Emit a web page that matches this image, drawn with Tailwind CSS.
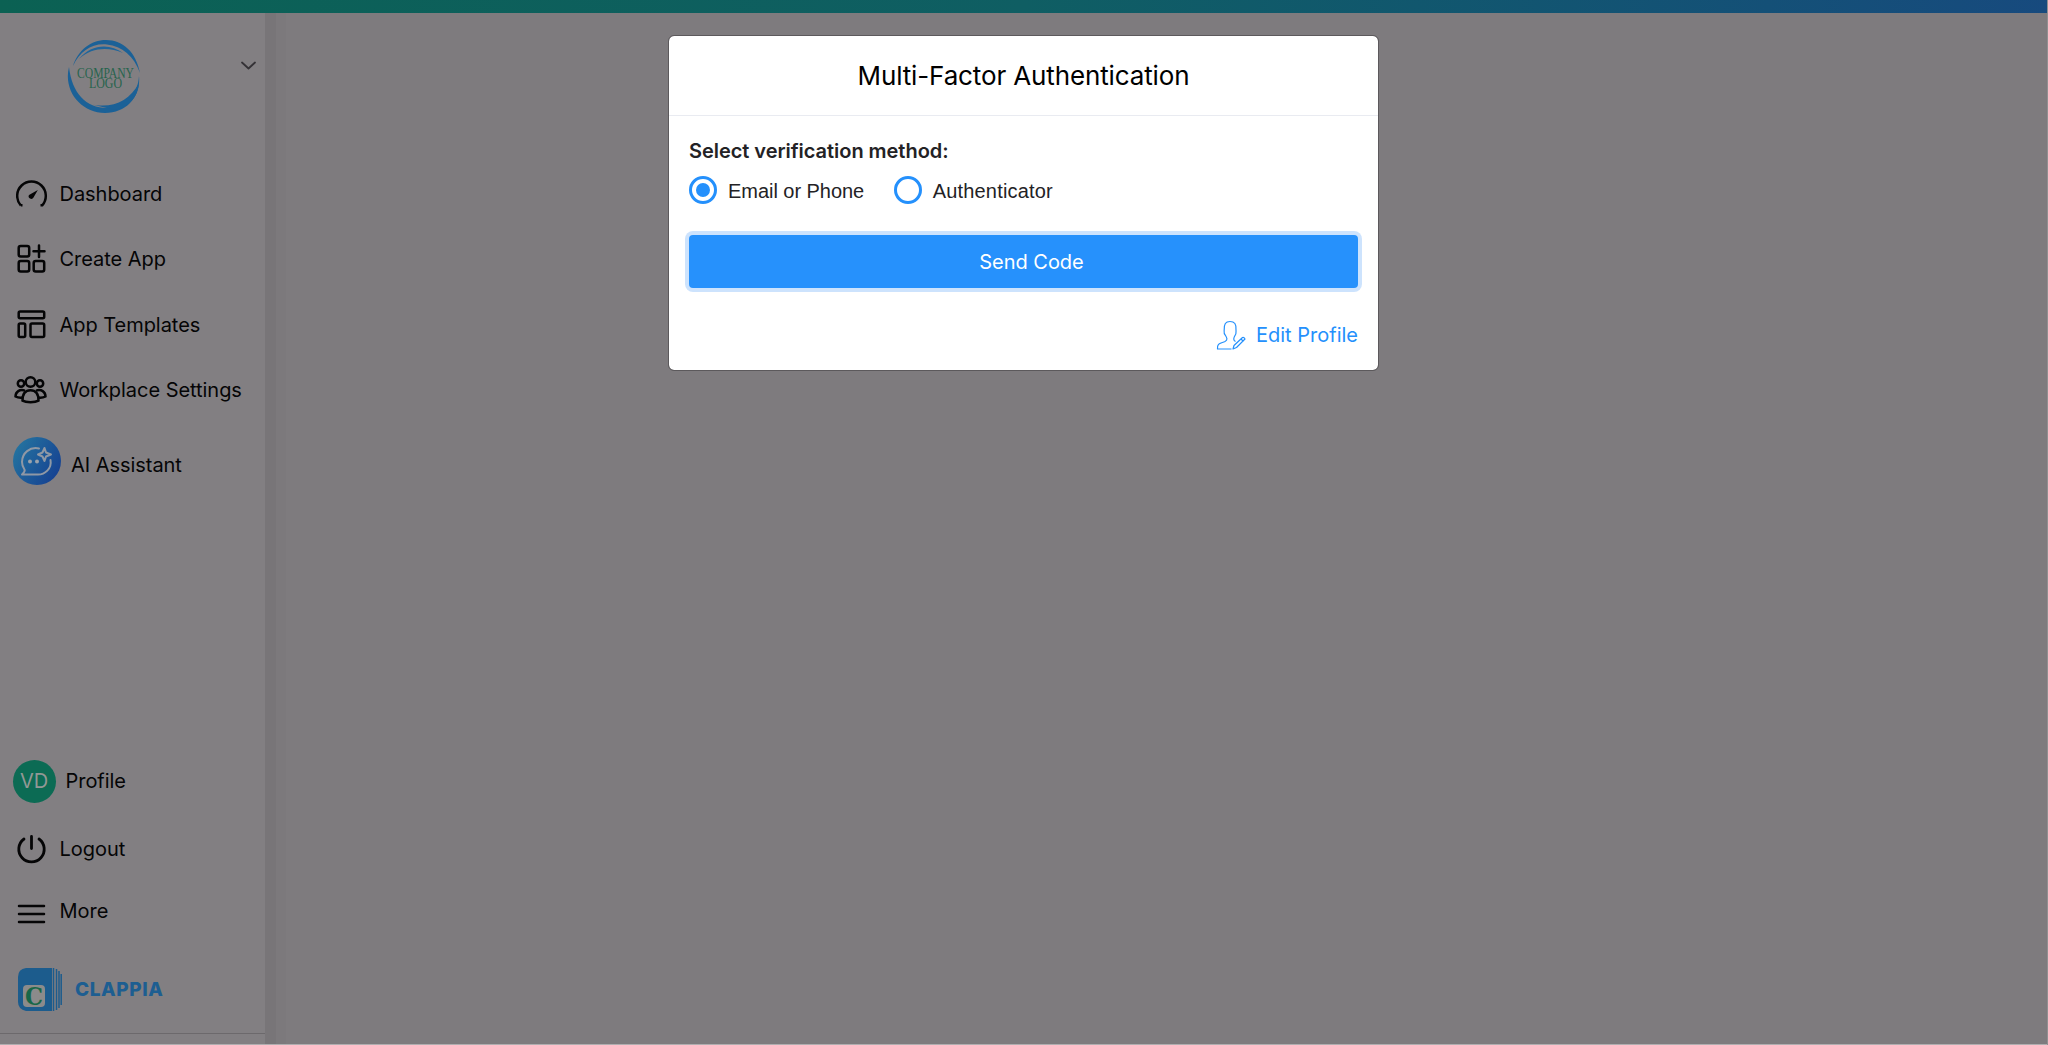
<!DOCTYPE html>
<html lang="en">
<head>
  <meta charset="UTF-8" />
  <meta name="viewport" content="width=device-width, initial-scale=1.0" />
  <title>Clappia - Multi-Factor Authentication</title>
  <script src="https://cdn.jsdelivr.net/npm/@tailwindcss/browser@4"></script>
</head>
<body class="relative flex flex-col h-screen overflow-hidden bg-[#7e7b7e] font-[Inter,sans-serif] text-[20px] leading-7 tracking-[-0.04px] text-[#050506]">

  <!-- Top bar -->
  <div class="h-[13px] shrink-0 bg-linear-to-r from-[#0b6153] via-[#0f5e63] to-[#174a7e]"></div>

  <div class="flex flex-1 min-h-0">

    <!-- Sidebar -->
    <aside class="w-[265px] flex flex-col bg-[#827f82]">

      <!-- Company logo -->
      <div class="flex h-[126px] pl-[67px] pt-[26px]">
        <svg class="w-[74px] h-[74px]" viewBox="0 0 74 74" fill="none">
          <path d="M6 27C11 11 24 1 39 1C56 1 69 13 73 34C67 17 55 7 40 5.500C25 4 13 12 6 27Z" fill="#1b6197" />
          <path d="M12 20C24 5 43 4 56 14C42 8 25 8 12 20Z" fill="#1f659b" />
          <path d="M2 28C-4 52 14 74 38 74C60 74 74 57 72 37C71 55 59 68 42 69C20 70 5 55 2 28Z" fill="#1b6197" />
          <path d="M72 44C71 58 62 68 48 71L23 65C44 70 62 63 72 44Z" fill="#1b6197" />
          <text x="38.500" y="38.500" text-anchor="middle" textLength="57" lengthAdjust="spacingAndGlyphs" letter-spacing="0" font-family="Liberation Serif, serif" font-size="15.500" fill="#27644d">COMPANY</text>
          <text x="38.500" y="49" text-anchor="middle" textLength="33" lengthAdjust="spacingAndGlyphs" letter-spacing="0" font-family="Liberation Serif, serif" font-size="14.500" fill="#27644d">LOGO</text>
        </svg>
        <svg class="w-4 h-4 ml-[99px] mt-[18px]" viewBox="0 0 16 16" fill="none" stroke="#343236" stroke-width="1.8" stroke-linecap="round" stroke-linejoin="round">
          <path d="M2 5.5L8.5 11.5L15 5.5" />
        </svg>
      </div>

      <!-- Main menu -->
      <nav class="flex flex-col pt-[22px]">
        <a href="#" class="flex items-center h-[65px] pl-4 gap-[11.5px]">
          <svg class="w-8 h-8" viewBox="0 0 32 32" fill="none" stroke="#050506" stroke-width="2.5">
            <path d="M4.800 27.300A14.300 14.300 0 1 1 26.200 27.300H24.500M4.800 27.300H6.500" />
            <path d="M13 17L21.800 12L17.500 19.500A2.500 2.500 0 1 1 13 17Z" fill="#050506" stroke="none" />
          </svg>
          <span>Dashboard</span>
        </a>
        <a href="#" class="flex items-center h-[65px] pl-4 gap-[11.5px]">
          <svg class="w-8 h-8" viewBox="0 0 32 32" fill="none" stroke="#050506" stroke-width="2.5">
            <rect x="2.700" y="3" width="10.500" height="10.500" rx="2" />
            <rect x="2.700" y="18" width="10.500" height="10.500" rx="2" />
            <rect x="17.700" y="18" width="10.500" height="10.500" rx="2" />
            <path d="M23 2.500V14M17.500 8.200H28.500" stroke-linecap="round" />
          </svg>
          <span>Create App</span>
        </a>
        <a href="#" class="flex items-center h-[66px] pl-4 gap-[11.5px]">
          <svg class="w-8 h-8" viewBox="0 0 32 32" fill="none" stroke="#050506" stroke-width="2.5">
            <rect x="2.700" y="3.500" width="25.500" height="6.700" rx="1.500" />
            <rect x="2.700" y="15.500" width="6.500" height="13.500" rx="1.500" />
            <rect x="14.500" y="15.500" width="13.700" height="13.500" rx="1.500" />
          </svg>
          <span class="pt-px">App Templates</span>
        </a>
        <a href="#" class="flex items-center h-[65px] pl-[14px] gap-[11.5px]">
          <svg class="w-[34px] h-[34px]" viewBox="0 0 34 34" fill="none" stroke="#050506" stroke-width="2.5" stroke-linejoin="round">
            <circle cx="16.500" cy="9" r="4.800" />
            <circle cx="7" cy="10.500" r="3.200" />
            <circle cx="26" cy="10.500" r="3.200" />
            <path d="M8.500 27.700C8.500 20 11.500 17.300 16.500 17.300S24.500 20 24.500 27.700C21 29.600 12 29.600 8.500 27.700Z" />
            <path d="M11 17.600C5.500 16 1.700 18.500 1.500 23.500C3.500 24.600 6 25 8.800 24.600" />
            <path d="M22 17.600C27.500 16 31.300 18.500 31.500 23.500C29.500 24.600 27 25 24.200 24.600" />
          </svg>
          <span>Workplace Settings</span>
        </a>
        <a href="#" class="flex items-center h-[74px] pl-[13px] mt-[2px] gap-[10px]">
          <svg class="w-12 h-12" viewBox="0 0 48 48" fill="none">
            <defs>
              <linearGradient id="ai" x1="0" y1="0.2" x2="1" y2="0.8">
                <stop offset="0" stop-color="#2575a0" />
                <stop offset="1" stop-color="#153f91" />
              </linearGradient>
            </defs>
            <circle cx="24" cy="24" r="24" fill="url(#ai)" />
            <g stroke="#8f98a5" stroke-width="2" stroke-linecap="round" stroke-linejoin="round">
              <path d="M26 11.5C17 9.5 9 16 9 25C9 29 10.5 31 11.5 32.5C12.5 34.5 10.5 36 9 37.5H24C32 38 39 31.5 37.5 23" />
              <path d="M31.500 11L33 15.500L38 17.500L33 19.500L31.500 24L29.500 19.500L25 17.500L29.500 15.500Z" />
            </g>
            <circle cx="17" cy="24.500" r="2" fill="#9aa2ac" />
            <circle cx="24" cy="24.500" r="2" fill="#9aa2ac" />
          </svg>
          <span class="pt-2">AI Assistant</span>
        </a>
      </nav>

      <!-- Bottom menu -->
      <nav class="flex flex-col mt-auto">
        <a href="#" class="flex items-center h-[68px] pl-[12.5px] gap-[10px]">
          <span class="w-[43px] h-[43px] flex items-center justify-center rounded-full bg-[#0c6b54] text-[#929895]">VD</span>
          <span>Profile</span>
        </a>
        <a href="#" class="flex items-center h-[68px] pl-4 gap-[11.5px]">
          <svg class="w-8 h-8" viewBox="0 0 32 32" fill="none" stroke="#050506" stroke-width="2.8" stroke-linecap="round">
            <path d="M15.500 3.500V15.500M8 6A12.700 12.700 0 1 0 23 6" />
          </svg>
          <span>Logout</span>
        </a>
        <a href="#" class="flex items-center h-[56px] pl-4 gap-[11.5px]">
          <svg class="w-8 h-8 mt-2" viewBox="0 0 32 32" fill="none" stroke="#050506" stroke-width="2.5" stroke-linecap="round">
            <path d="M3 7H28M3 15H28M3 23H28" />
          </svg>
          <span>More</span>
        </a>
        <div class="flex items-center h-[95px] pl-[18px] pt-[29px] pb-[22px] gap-[13px] border-b border-[#6c696c]">
          <svg class="w-11 h-[43px]" viewBox="0 0 44 43" fill="none">
            <path d="M8 0H34V43H8Q0 41 0 34V9Q0 1 8 0Z" fill="#1c5c8d" />
            <path d="M35.500 0V43M38.500 1V42M41 3V40" stroke="#1c5c8d" stroke-width="1.500" />
            <path d="M43.200 6V37" stroke="#1c5c8d" stroke-width="1.500" />
            <rect x="5" y="17" width="22" height="22" rx="4" fill="#8b8b8b" />
            <text x="16" y="37" text-anchor="middle" textLength="18" lengthAdjust="spacingAndGlyphs" letter-spacing="0" font-family="DejaVu Serif, serif" font-weight="700" font-size="24" fill="#176748">C</text>
          </svg>
          <span class="pt-px font-extrabold text-[19px] tracking-[0.6px] text-[#1d5e91]">CLAPPIA</span>
        </div>
        <div class="h-[10px]"></div>
      </nav>
    </aside>

    <!-- Sidebar edge -->
    <div class="w-[11px] bg-[#787578]"></div>
    <div class="w-[10px] bg-[#7c797c]"></div>
    <main class="flex-1"></main>
  </div>

  <!-- Window edge -->
  <div class="h-px shrink-0 bg-[#b0aeb0]"></div>
  <div class="absolute right-0 top-0 w-px h-full bg-[#919091]"></div>

  <!-- Multi-factor modal -->
  <div class="absolute left-[669px] top-9 w-[709px] h-[334px] flex flex-col rounded-[5px] bg-white outline outline-[#5c595c]">
    <div class="h-[80px] flex items-center justify-center border-b border-[#e9ebf1] text-black text-[26px]">
      <h1 class="tracking-[-0.13px]">Multi-Factor Authentication</h1>
    </div>
    <div class="px-5 pt-[21px] text-[#232225]">
      <p class="font-semibold">Select verification method:</p>
      <div class="flex h-7 mt-[11px] gap-[29.500px] font-['Liberation_Sans',sans-serif]">
        <label class="flex items-center gap-[11px]">
          <span class="w-7 h-7 flex items-center justify-center rounded-full border-[3px] border-[#2490fc]">
            <span class="w-[14px] h-[14px] rounded-full bg-[#2490fc]"></span>
          </span>
          <span class="pt-[2px] leading-[26px]">Email or Phone</span>
        </label>
        <label class="flex items-center gap-[11px]">
          <span class="w-7 h-7 rounded-full border-[3px] border-[#2490fc]"></span>
          <span class="pt-[2px] leading-[26px] tracking-[0.18px]">Authenticator</span>
        </label>
      </div>
      <button class="block w-full h-[53px] mt-[31px] pl-4 rounded-[4px] bg-[#2691fc] text-white ring-4 ring-[#cde3fd]">Send Code</button>
      <div class="flex items-center justify-end mt-[32px] gap-[9px] text-[#2490fc]">
        <svg class="w-[31px] h-[31px]" viewBox="0 0 31 31" fill="none" stroke="#2490fc" stroke-width="1.200" stroke-linejoin="round">
          <path d="M15.500 29H1.500C1 23 4 23.500 9 21.500C12 20 11 18 9.500 15.500C7.500 14 8 12 8.200 10C8 4 9.500 1.500 14 1.500S20.500 4 20 10C20 12 20.500 14 19 15.500C17.500 18 17 20 19.500 21.500" />
          <path d="M17 29L18 25.500L26.500 17.500Q28 17 29 19L20.500 27.500ZM25 19L27.500 21.500" />
        </svg>
        <a href="#" class="pb-[2px] tracking-normal">Edit Profile</a>
      </div>
    </div>
  </div>

</body>
</html>
